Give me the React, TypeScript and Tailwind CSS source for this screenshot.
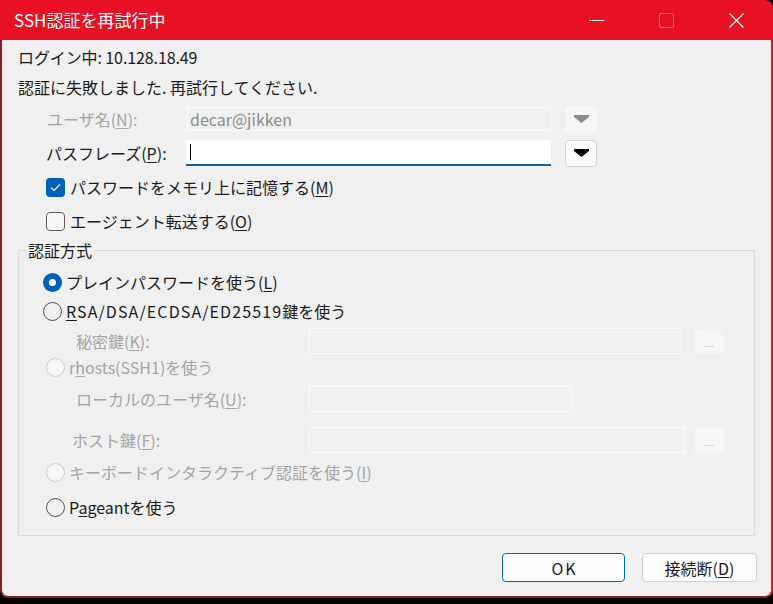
import React from 'react'

const FONT = '"Noto Sans CJK JP", "Noto Sans", sans-serif'

type RadioState = 'on' | 'off' | 'disabled'

const Radio: React.FC<{ state: RadioState }> = ({ state }) => {
  if (state === 'on') {
    return (
      <span className="flex h-[19px] w-[19px] shrink-0 items-center justify-center rounded-full bg-[#005fb8]">
        <span className="h-[7px] w-[7px] rounded-full bg-white" />
      </span>
    )
  }
  if (state === 'disabled') {
    return <span className="h-[19px] w-[19px] shrink-0 rounded-full border border-[#cbcbcb] bg-[#f6f6f6]" />
  }
  return <span className="h-[19px] w-[19px] shrink-0 rounded-full border border-[#4f4f4f]" />
}

const Checkbox: React.FC<{ checked?: boolean }> = ({ checked }) =>
  checked ? (
    <span className="flex h-[19px] w-[19px] shrink-0 items-center justify-center rounded-[4px] bg-[#005fb8]">
      <svg width="11" height="9" viewBox="0 0 11 9" fill="none">
        <path d="M1 4.6 L4 7.4 L10 1.4" stroke="white" strokeWidth="1.2" />
      </svg>
    </span>
  ) : (
    <span className="h-[19px] w-[19px] shrink-0 rounded-[4px] border border-[#5c5c5c] bg-[#f7f7f7]" />
  )

const DropButton: React.FC<{ disabled?: boolean }> = ({ disabled }) => (
  <div
    className={`flex h-[27px] w-[32px] items-center justify-center rounded-[4px] ${
      disabled ? 'bg-[#f6f6f6]' : 'border border-[#d2d2d2] bg-[#fbfbfb]'
    }`}
  >
    <svg width="15" height="8" viewBox="0 0 15 8">
      <path d="M0 0H15V2L7.5 8L0 2Z" fill={disabled ? '#8c8c8c' : '#000'} />
    </svg>
  </div>
)

const BrowseButton: React.FC = () => (
  <div className="flex h-[25px] w-[30px] items-end justify-center rounded-[4px] bg-[#f6f6f6] pb-[6px] text-[9px] leading-none tracking-[1px] text-[#a5a5a5]">
    ...
  </div>
)

const DisabledBox: React.FC<{ width: string }> = ({ width }) => (
  <div className={`h-[26px] ${width} border border-[#fbfbfb] bg-[#f0f0f0]`} />
)

export default function App() {
  return (
    <div className="h-[604px] w-[773px] bg-black text-[16px] text-[#1a1a1a]" style={{ fontFamily: FONT }}>
      {/* title bar */}
      <div className="flex h-[40px] items-center rounded-tr-[8px] bg-[#e81123] pl-[14px] text-white">
        <span className="flex-1 text-[17px]">SSH認証を再試行中</span>
        <div className="flex h-full items-center pr-[2px]">
          <div className="flex w-[70px] items-center justify-center">
            <span className="h-[1px] w-[15px] bg-white" />
          </div>
          <div className="flex w-[70px] items-center justify-center">
            <span className="h-[15px] w-[15px] rounded-[2px] border border-[#f6646f]" />
          </div>
          <div className="flex w-[70px] items-center justify-center">
            <svg width="15" height="15" viewBox="0 0 15 15">
              <path d="M0.5 0.5L14.5 14.5M14.5 0.5L0.5 14.5" stroke="white" strokeWidth="1.1" />
            </svg>
          </div>
        </div>
      </div>

      {/* dialog body */}
      <div className="flex h-[558px] flex-col rounded-b-[8px] border-x-2 border-b-2 border-l-[#881b2a] border-r-[#e81123] border-b-[#8a1a2a] bg-[#f0f0f0] pt-[2px]">
        <div className="flex h-[30px] items-center pl-[16px] tracking-[-0.1px]">ログイン中: 10.128.18.49</div>
        <div className="flex h-[30px] items-center pl-[16px]">認証に失敗しました. 再試行してください.</div>

        <div className="flex h-[34px] items-center pl-[45px]">
          <span className="w-[140px] text-[#a3a3a3]">
            ユーザ名(<u className="underline-offset-2">N</u>):
          </span>
          <div className="flex h-[24px] w-[364px] items-center border border-[#fbfbfb] bg-[#f0f0f0] pl-[2px] text-[#8c8c8c]">
            decar@jikken
          </div>
          <div className="ml-[14px]">
            <DropButton disabled />
          </div>
        </div>

        <div className="flex h-[34px] items-center pl-[44px]">
          <span className="w-[140px]">
            パスフレーズ(<u className="underline-offset-2">P</u>):
          </span>
          <div className="flex h-[26px] w-[365px] items-center border-b-2 border-[#0f65a8] bg-white pl-[4px]">
            <span className="h-[16px] w-[1px] bg-black" />
          </div>
          <div className="ml-[14px]">
            <DropButton />
          </div>
        </div>

        <div className="flex h-[34px] items-center gap-[5px] pl-[44px]">
          <Checkbox checked />
          <span>
            パスワードをメモリ上に記憶する(<u className="underline-offset-2">M</u>)
          </span>
        </div>
        <div className="flex h-[34px] items-center gap-[5px] pl-[44px]">
          <Checkbox />
          <span>
            エージェント転送する(<u className="underline-offset-2">O</u>)
          </span>
        </div>

        {/* authentication method group */}
        <fieldset className="mx-[16px] mt-[2px] h-[296px] border border-[#dadada] px-0">
          <legend className="ml-[8px] px-[1px] leading-[20px]">認証方式</legend>
          <div className="flex flex-col pt-[8px]">
            <div className="flex h-[28px] items-center gap-[4px] pl-[24px]">
              <Radio state="on" />
              <span>
                プレインパスワードを使う(<u className="underline-offset-2">L</u>)
              </span>
            </div>
            <div className="flex h-[30px] items-center gap-[4px] pl-[24px]">
              <Radio state="off" />
              <span>
                <span className="tracking-[1.1px]">
                  <u className="underline-offset-2">R</u>SA/DSA/ECDSA/ED25519
                </span>
                鍵を使う
              </span>
            </div>
            <div className="flex h-[30px] items-center pl-[57px] text-[#a3a3a3]">
              <span className="w-[233px]">
                秘密鍵(<u className="underline-offset-2">K</u>):
              </span>
              <DisabledBox width="w-[373px]" />
              <div className="ml-[12px]">
                <BrowseButton />
              </div>
            </div>
            <div className="flex h-[22px] items-center gap-[4px] pl-[27px] text-[#a3a3a3]">
              <Radio state="disabled" />
              <span>
                r<u className="underline-offset-2">h</u>osts(SSH1)を使う
              </span>
            </div>
            <div className="flex h-[42px] items-center pl-[57px] text-[#a3a3a3]">
              <span className="w-[233px]">
                ローカルのユーザ名(<u className="underline-offset-2">U</u>):
              </span>
              <DisabledBox width="w-[263px]" />
            </div>
            <div className="flex h-[40px] items-center pl-[53px] text-[#a3a3a3]">
              <span className="w-[237px]">
                ホスト鍵(<u className="underline-offset-2">F</u>):
              </span>
              <DisabledBox width="w-[376px]" />
              <div className="ml-[9px]">
                <BrowseButton />
              </div>
            </div>
            <div className="flex h-[24px] items-center gap-[4px] pl-[27px] text-[#a3a3a3]">
              <Radio state="disabled" />
              <span>
                キーボードインタラクティブ認証を使う(<u className="underline-offset-2">I</u>)
              </span>
            </div>
            <div className="mt-[10px] flex h-[26px] items-center gap-[4px] pl-[27px]">
              <Radio state="off" />
              <span>
                P<u className="underline-offset-2">a</u>geantを使う
              </span>
            </div>
          </div>
        </fieldset>

        <div className="mt-[17px] flex justify-end gap-[17px] pr-[14px]">
          <button className="flex h-[29px] w-[123px] items-center justify-center rounded-[4px] border border-[#0067c0] bg-[#fdfdfd] pl-[2px] tracking-[2px] text-[#1a1a1a]">
            OK
          </button>
          <button className="flex h-[29px] w-[115px] items-center justify-center rounded-[4px] border border-[#d0d0d0] bg-[#fdfdfd] text-[#1a1a1a]">
            接続断(<u className="underline-offset-2">D</u>)
          </button>
        </div>
      </div>
    </div>
  )
}
